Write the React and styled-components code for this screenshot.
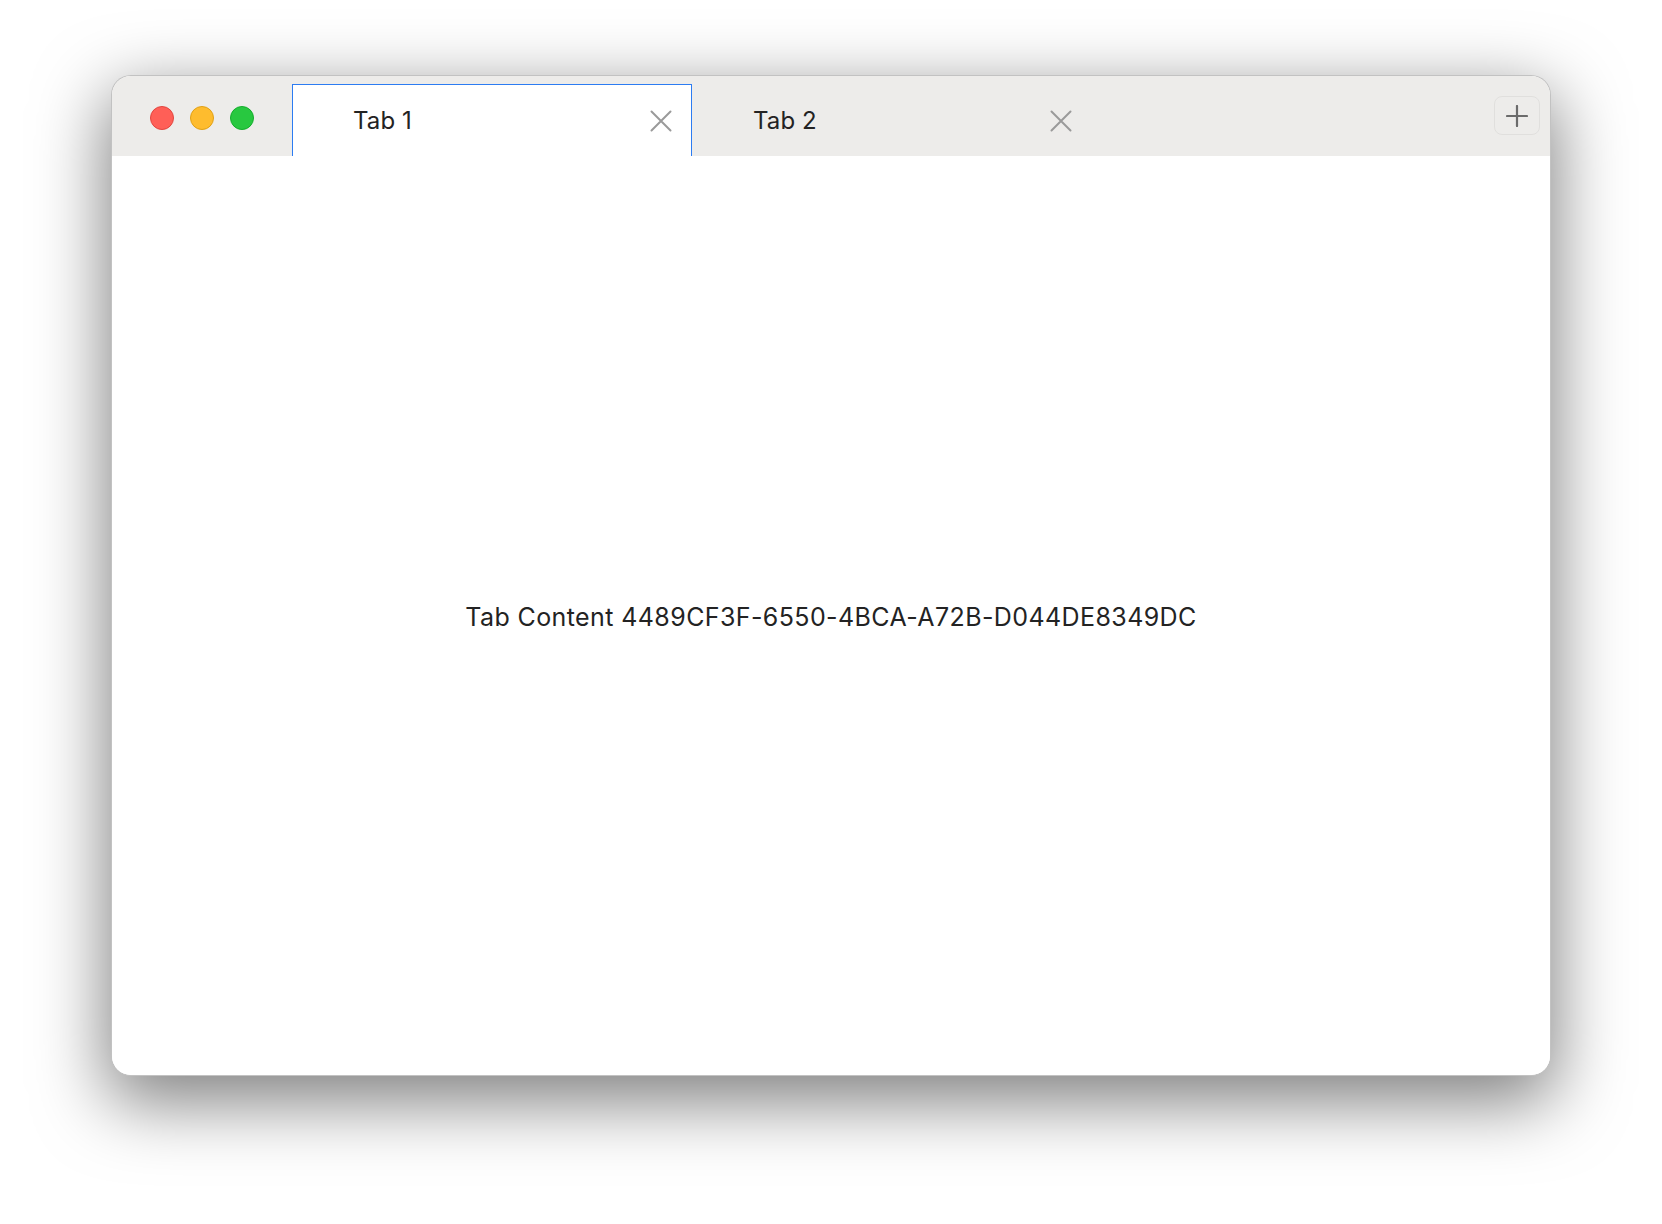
import React, { useState } from 'react';
import styled, { createGlobalStyle } from 'styled-components';

const GlobalStyle = createGlobalStyle`
  html, body {
    margin: 0;
    padding: 0;
    background: #ffffff;
  }
  body {
    font-family: Inter, "Noto Sans", "Liberation Sans", sans-serif;
    -webkit-font-smoothing: antialiased;
  }
`;

const Page = styled.div`
  width: 1662px;
  height: 1224px;
  padding: 75px 0 0 111px;
  box-sizing: border-box;
  background: #ffffff;
`;

const Window = styled.div`
  width: 1440px;
  height: 1001px;
  box-sizing: border-box;
  display: flex;
  flex-direction: column;
  border: 1px solid rgba(0, 0, 0, 0.24);
  border-radius: 20px;
  overflow: hidden;
  background: #ffffff;
  box-shadow: 0 22px 70px 4px rgba(0, 0, 0, 0.5);
`;

const TitleBar = styled.div`
  height: 80px;
  flex-shrink: 0;
  display: flex;
  align-items: flex-end;
  background: #edecea;
  position: relative;
`;

const Lights = styled.div`
  height: 72px;
  display: flex;
  align-items: center;
  gap: 16px;
  padding: 0 38px 4px 38px;
  box-sizing: border-box;
`;

const Light = styled.span`
  width: 24px;
  height: 24px;
  border-radius: 50%;
  box-sizing: border-box;
  background: ${({ color }) => color};
  border: 1px solid ${({ edge }) => edge};
`;

const Tabs = styled.div`
  display: flex;
  height: 72px;
  flex: 1;
`;

const Tab = styled.div`
  width: 400px;
  height: 72px;
  box-sizing: border-box;
  display: flex;
  align-items: center;
  padding: 0 19px 0 60px;
  background: ${({ active }) => (active ? '#ffffff' : 'transparent')};
  border: 1px solid ${({ active }) => (active ? '#2c7cf2' : 'transparent')};
  border-bottom: none;
  cursor: default;
`;

const TabLabel = styled.span`
  flex: 1;
  font-size: 24px;
  color: #232323;
  letter-spacing: 0.1px;
`;

const CloseButton = styled.button`
  width: 22px;
  height: 22px;
  padding: 0;
  border: none;
  background: none;
  display: flex;
  align-items: center;
  justify-content: center;
  cursor: pointer;
`;

const AddButton = styled.button`
  position: absolute;
  right: 10px;
  top: 20px;
  width: 46px;
  height: 39px;
  box-sizing: border-box;
  border-radius: 8px;
  border: 1px solid #e0dfdd;
  background: #edecea;
  display: flex;
  align-items: center;
  justify-content: center;
  padding: 0;
  cursor: pointer;
`;

const Content = styled.div`
  flex: 1;
  display: flex;
  align-items: center;
  justify-content: center;
  padding-top: 2px;
  background: #ffffff;
  font-size: 25px;
  color: #232323;
  letter-spacing: 0.4px;
`;

const CloseIcon = () => (
  <svg width="22" height="22" viewBox="0 0 22 22">
    <path d="M1.5 1.5 L20.5 20.5 M20.5 1.5 L1.5 20.5" stroke="#9a9a9a" strokeWidth="2" strokeLinecap="round" />
  </svg>
);

const PlusIcon = () => (
  <svg width="22" height="22" viewBox="0 0 22 22">
    <path d="M11 1 V21 M1 11 H21" stroke="#6b6b6b" strokeWidth="2.2" strokeLinecap="round" />
  </svg>
);

const tabs = [
  { id: 1, title: 'Tab 1', content: 'Tab Content 4489CF3F-6550-4BCA-A72B-D044DE8349DC' },
  { id: 2, title: 'Tab 2', content: 'Tab Content 7F0C1B2A-9E3D-4F6A-8B5C-2D1E0F3A4B5C' },
];

export default function App() {
  const [active, setActive] = useState(1);
  const current = tabs.find((t) => t.id === active);

  return (
    <>
      <GlobalStyle />
      <Page>
        <Window>
          <TitleBar>
            <Lights>
              <Light color="#ff5f57" edge="#e2463f" />
              <Light color="#febc2e" edge="#e1a116" />
              <Light color="#28c840" edge="#14ae2c" />
            </Lights>
            <Tabs>
              {tabs.map((tab) => (
                <Tab key={tab.id} active={tab.id === active} onClick={() => setActive(tab.id)}>
                  <TabLabel>{tab.title}</TabLabel>
                  <CloseButton aria-label="Close tab">
                    <CloseIcon />
                  </CloseButton>
                </Tab>
              ))}
            </Tabs>
            <AddButton aria-label="New tab">
              <PlusIcon />
            </AddButton>
          </TitleBar>
          <Content>{current && current.content}</Content>
        </Window>
      </Page>
    </>
  );
}
